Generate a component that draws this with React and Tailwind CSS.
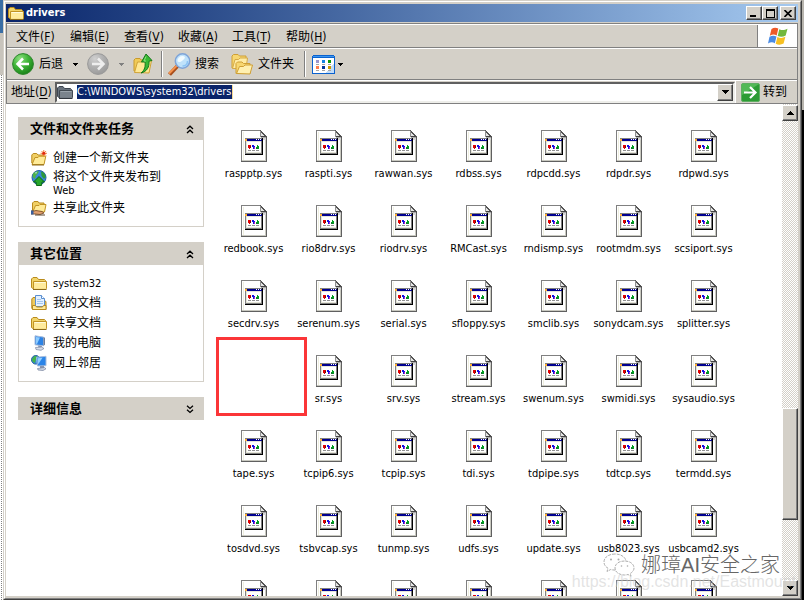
import React from 'react';

const FILES = [
  'raspptp.sys', 'raspti.sys', 'rawwan.sys', 'rdbss.sys', 'rdpcdd.sys', 'rdpdr.sys', 'rdpwd.sys',
  'redbook.sys', 'rio8drv.sys', 'riodrv.sys', 'RMCast.sys', 'rndismp.sys', 'rootmdm.sys', 'scsiport.sys',
  'secdrv.sys', 'serenum.sys', 'serial.sys', 'sfloppy.sys', 'smclib.sys', 'sonydcam.sys', 'splitter.sys',
  null, 'sr.sys', 'srv.sys', 'stream.sys', 'swenum.sys', 'swmidi.sys', 'sysaudio.sys',
  'tape.sys', 'tcpip6.sys', 'tcpip.sys', 'tdi.sys', 'tdpipe.sys', 'tdtcp.sys', 'termdd.sys',
  'tosdvd.sys', 'tsbvcap.sys', 'tunmp.sys', 'udfs.sys', 'update.sys', 'usb8023.sys', 'usbcamd2.sys',
  '', '', '', '', '', '', '',
];

const MENUS = [
  ['文件', 'F'], ['编辑', 'E'], ['查看', 'V'], ['收藏', 'A'], ['工具', 'T'], ['帮助', 'H'],
];

const RAISED =
  'flex shrink-0 items-center justify-center border border-t-white border-l-white border-r-[#404040] border-b-[#404040] bg-[#d4d0c8] shadow-[inset_-1px_-1px_0_#808080]';

function SysIcon() {
  return (
    <svg width="26" height="32" viewBox="0 0 26 32" shapeRendering="crispEdges" aria-hidden="true">
      <path d="M0 0H20L26 7V32H0Z" fill="#808080" />
      <path d="M1 1H19V7H25V31H1Z" fill="#fff" />
      <path d="M1 30H24V8H25V31H1Z" fill="#c9c9c0" />
      <path d="M2 2H3V30H2Z" fill="#efefdf" />
      <path d="M25 8H26V32H25Z" fill="#606060" />
      <path d="M0 31H26V32H0Z" fill="#606060" />
      <path d="M20 0h6v7h-1V6h-1V5h-1V4h-1V3h-1V2h-1z" fill="#fff" />
      <path d="M19 1h1v1h1v1h1v1h1v1h1v1h1v1h-6z" fill="#e4e4e4" />
      <path d="M19 0h1v1h1v1h1v1h1v1h1v1h1v1h1v2h-1V7h-1V6h-1V5h-1V4h-1V3h-1V2h-1z" fill="#555" />
      <path d="M19 1h1v6h-1z" fill="#909090" />
      <path d="M20 6H25V7H20Z" fill="#444" />
      <path d="M20 7H25V8H20Z" fill="#aaa" />
      <path d="M22 8H25V10H22Z" fill="#d4d4d4" />
      <path d="M4 8H22V25H4Z" fill="#808080" />
      <path d="M21 8H22V25H4V24H21Z" fill="#000" />
      <path d="M5 12H20V23H5Z" fill="#fff" />
      <path d="M5 11H20V12H5ZM5 22H20V23H5ZM5 12H6V23H5Z" fill="#e6e6d8" />
      <path d="M5 9H21V11H5Z" fill="#000090" />
      <path d="M4 9H6V11H4Z" fill="#ffb030" />
      <path d="M15 9h1v1h-1zM17 9h1v1h-1zM19 9h1v1h-1z" fill="#fff" />
      <path d="M7 15h3v3h-1v1h-1v-1h-1z" fill="#e00000" />
      <path d="M9 16h1v2h-1z" fill="#701010" />
      <path d="M11 15h2v1h1v1h-1v2h-1v-2h-1z" fill="#1010e0" />
      <path d="M13 17h1v2h-1z" fill="#c020c0" />
      <path d="M16 15h1v1h1v3h-3v-2h1z" fill="#00a020" />
      <path d="M15 18h2v1h-2z" fill="#107030" />
      <path d="M7 20h3v1H7zM11 20h3v1h-3zM15 20h3v1h-3z" fill="#909090" />
    </svg>
  );
}

function Folder({ size = 16, dark = false }) {
  return (
    <svg width={size} height={size} viewBox="0 0 16 16" className="shrink-0" aria-hidden="true">
      <path d="M.5 12.5V4L2 2.5h4L7.5 4.5h6l1 1v8H2z" fill={dark ? '#69727c' : '#f2d468'} stroke={dark ? '#3e4650' : '#b98b1e'} />
      <path d="M2.500 6.500h13v7l-1 .9H2.500z" fill={dark ? '#7a838c' : '#ffeb9c'} stroke={dark ? '#414951' : '#c29424'} />
      <path d="M3.500 7.500h11" stroke={dark ? '#9aa3ab' : '#fffbe0'} />
      <path d="M2 14.500h13.500" stroke={dark ? '#30363e' : '#8d6a1a'} />
    </svg>
  );
}

function NewFolder() {
  return (
    <svg width="16" height="16" viewBox="0 0 16 16" className="shrink-0" aria-hidden="true">
      <path d="M.8 13V5l1.400-1.500h3.500L7 5h6v8z" fill="#f0cf64" stroke="#b98b1e" />
      <path d="M1 14.500 4 7.500h3l1.200-1.300h6.600L13 14.500z" fill="#ffeb98" stroke="#c29424" />
      <path d="M1 15h12" stroke="#8d6a1a" />
      <path d="M12.800 0v6.600M9.500 3.300h6.500M10.500 1l4.600 4.600M15.100 1l-4.600 4.600" stroke="#f4803c" strokeWidth="1" />
      <circle cx="12.800" cy="3.300" r="1.500" fill="#e02810" />
    </svg>
  );
}

function PublishWeb() {
  return (
    <svg width="16" height="16" viewBox="0 0 16 16" className="shrink-0" aria-hidden="true">
      <circle cx="8" cy="7.500" r="7" fill="#3a86dc" stroke="#235fa8" />
      <path d="M2 3.500C4 1 7 .8 8 1.500L6.500 4 5 5.500 4 9 1.500 7z" fill="#4db34a" />
      <path d="M10 1.500c3 .5 4.500 3 4.800 5.500L13 9l-2.500-3z" fill="#2f9a3a" />
      <path d="M4 2.500 6 2 5 4z" fill="#bfe6f8" />
      <path d="m8 6.500 5.500 5.500H11l-.5 3.500h-5L5 12H2.500z" fill="#27a52c" stroke="#0d6a15" />
    </svg>
  );
}

function ShareFolder() {
  return (
    <svg width="16" height="16" viewBox="0 0 16 16" className="shrink-0" aria-hidden="true">
      <path d="M1.500 11V3L3 1.500h4L8 3h5v8z" fill="#f0cf64" stroke="#b98b1e" />
      <path d="m2 11.500 2.500-6H8L9 4.500h6L13.500 12z" fill="#ffeb98" stroke="#c29424" />
      <path d="M0 11h3l2-.5 6 1 2 1.500-4 1.500-5-.5H0z" fill="#e0a070" stroke="#70401c" strokeWidth=".8" />
      <path d="M0 10.500h2.500v4H0z" fill="#3a5f9c" />
      <path d="M4 15h10" stroke="#5c4630" />
    </svg>
  );
}

function Documents() {
  return (
    <svg width="16" height="16" viewBox="0 0 16 16" className="shrink-0" aria-hidden="true">
      <path d="M.8 13.500V4L2 2.500h3v3h8l2 1v8H2z" fill="#efcb5e" stroke="#b98b1e" />
      <path d="M4.500.5h6l3 3v8h-9z" fill="#e4f1ff" stroke="#5b8fd0" />
      <path d="M10.500.5v3h3" fill="#fff" stroke="#5b8fd0" />
      <path d="M6 4.500h4M6 6.500h6M6 8.500h6" stroke="#a3c6ee" />
      <path d="M1.500 14.500v-4h3l1 1.500h6l1-1.500h2.500v4z" fill="#ffe998" stroke="#b98b1e" />
    </svg>
  );
}

function Computer() {
  return (
    <svg width="16" height="16" viewBox="0 0 16 16" className="shrink-0" aria-hidden="true">
      <path d="m4 .8 8.500 1.300v8.700L4 9.800z" fill="#2b83e6" stroke="#a9bddb" />
      <path d="m5 2 4 .5-3 6.500-1-.2z" fill="#8ccbff" />
      <path d="m12.500 2 1.500.8v7l-1.500 1z" fill="#6b7d9c" />
      <path d="m7 10.500 4 .5-.5 2h-3z" fill="#8c9ab4" />
      <path d="m4.500 12.500 6-.5 2.500 1.500-3 1.800-5-.8z" fill="#d7deea" stroke="#7884a0" strokeWidth=".7" />
    </svg>
  );
}

function Network() {
  return (
    <svg width="16" height="16" viewBox="0 0 16 16" className="shrink-0" aria-hidden="true">
      <circle cx="4.800" cy="4.800" r="4.300" fill="#3587dc" stroke="#255e9c" />
      <path d="M1 4 3.500 1l3 .5L5 4 4 8 1.500 6.500z" fill="#43b446" />
      <path d="m5.500 2.300 9.500-1v9.400l-8.500.3z" fill="#2a84e8" stroke="#a7bddd" />
      <path d="m6.500 3.300 5-.5-4.300 6.500z" fill="#91d0ff" />
      <path d="m9 11 4-.2v2.400H9z" fill="#8997b0" />
      <path d="m6.500 13.500 7-1 1.500 1.300-3 1.700-5-.5z" fill="#ccd5e4" stroke="#74809b" strokeWidth=".7" />
    </svg>
  );
}

function CircleArrow({ forward = false }) {
  return (
    <svg width="22" height="22" viewBox="0 0 22 22" className="shrink-0" aria-hidden="true">
      <defs>
        <radialGradient id={forward ? 'fwd' : 'back'} cx="35%" cy="25%" r="80%">
          <stop offset="0" stopColor={forward ? '#d0d0d0' : '#8fe080'} />
          <stop offset=".5" stopColor={forward ? '#b0b0b0' : '#3fb437'} />
          <stop offset="1" stopColor={forward ? '#9a9a9a' : '#188018'} />
        </radialGradient>
      </defs>
      <circle cx="11" cy="11" r="10.400" fill={forward ? 'url(#fwd)' : 'url(#back)'} stroke={forward ? '#999' : '#2c862a'} />
      <path
        d={forward ? 'M5 11h11M11 5.500l5.500 5.500-5.500 5.500' : 'M17 11H6M11 5.500 5.500 11l5.500 5.500'}
        fill="none"
        stroke={forward ? '#eee' : '#fff'}
        strokeWidth="2.500"
      />
    </svg>
  );
}

function UpFolder() {
  return (
    <svg width="20" height="22" viewBox="0 0 20 22" className="shrink-0" aria-hidden="true">
      <path d="M1 18V7l1.500-1.500H7L8 7h8v12z" fill="#f0cb57" stroke="#c99a2d" />
      <path d="m1.500 19.500 3-10.500H9l1.500-1.500h8L16 20z" fill="#ffe893" stroke="#d0a338" />
      <path d="M8 20c4-3 4.500-7 4-11H8.500L13 1l6 6.500-3 .7c.5 5.800-2 10.300-8 11.800z" fill="#38b834" stroke="#16781a" />
      <path d="M13 3.500 11 8h2" fill="none" stroke="#8ce27c" />
    </svg>
  );
}

function SearchIcon() {
  return (
    <svg width="23" height="23" viewBox="0 0 23 23" className="shrink-0" aria-hidden="true">
      <path d="m1.500 21.500 8-8.500" stroke="#a84e1c" strokeWidth="4" />
      <path d="m1 20.500 8-8" stroke="#f5924c" strokeWidth="2" />
      <circle cx="14.500" cy="8" r="7.200" fill="#bfe2fb" stroke="#7fa4d8" strokeWidth="1.500" />
      <path d="M9.500 8a5 5 0 0 1 5-5c2 0 3 1 2 2.500S11 11 9.500 8z" fill="#f2fbff" />
      <path d="M19.500 8c0 3-2 5-5 5" fill="none" stroke="#8cc4f4" strokeWidth="1.500" />
    </svg>
  );
}

function FoldersIcon() {
  return (
    <svg width="22" height="22" viewBox="0 0 22 22" className="shrink-0" aria-hidden="true">
      <path d="M1 15V3l1.500-1.500H7L8.500 3H15v12z" fill="#f7d772" stroke="#cf9f35" />
      <path d="m1.500 15.500 2.500-9h3.500L9 5h7.500L15 15.500z" fill="#ffeca5" stroke="#d5aa48" />
      <path d="M5 20.500v-10L6.500 9H11l1.500 1.500H19v10z" fill="#f7d772" stroke="#cf9f35" />
      <path d="m5.500 20.500 3-7h4l1.500-1.500h7.500l-2.500 9z" fill="#fff0b0" stroke="#cf9f35" />
    </svg>
  );
}

function ViewsIcon() {
  return (
    <svg width="23" height="19" viewBox="0 0 23 19" shapeRendering="crispEdges" className="shrink-0" aria-hidden="true">
      <path d="M0 1H1V0H22V1H23V19H0Z" fill="#0b62cf" />
      <path d="M1 3H22V18H1Z" fill="#fff" />
      <path d="M14 18 22 8V18Z" fill="#c2dcf8" />
      <path d="M1 1H22V2H1Z" fill="#3c96f0" />
      <path d="M4 5h3v3H4z" fill="#9c96cc" />
      <path d="M10 5h3v3h-3z" fill="#1284e4" />
      <path d="M16 5h3v3h-3z" fill="#0a980a" />
      <path d="M4 11h3v3H4z" fill="#ff7d4c" />
      <path d="M10 11h3v3h-3z" fill="#003399" />
      <path d="M16 11h3v3h-3z" fill="#cc9900" />
      <path d="M4 9h3v1H4zM10 9h3v1h-3zM16 9h3v1h-3zM4 15h3v1H4zM10 15h3v1h-3zM16 15h3v1h-3z" fill="#a4a4a4" />
    </svg>
  );
}

function WindowsFlag() {
  return (
    <svg width="20" height="19" viewBox="0 0 20 19" aria-hidden="true">
      <path d="M3.500 2C6 .3 8 .4 10.300 1.600L8.700 8.400C6.500 7.200 4.500 7.200 1.800 8.700z" fill="#ee5a28" />
      <path d="M11.300 2.200c2.700 1.200 5 1.200 8.200-.4L17.700 8.600c-2.800 1.500-5.200 1.600-8 .4z" fill="#73b83c" />
      <path d="M1.500 9.800c2.500-1.500 4.700-1.400 7-.3L6.800 16.200C4.700 15 2.600 15.100 0 16.500z" fill="#4a8be4" />
      <path d="M9.400 10c2.700 1.200 5.200 1.200 8-.2l-1.800 6.700c-2.700 1.500-5.200 1.500-7.900.2z" fill="#f7c022" />
    </svg>
  );
}

function Caret({ color = '#000', up = false, small = false }) {
  return (
    <svg width={small ? 5 : 7} height={small ? 3 : 4} viewBox={small ? '1 1 5 3' : '0 0 7 4'} shapeRendering="crispEdges" className="shrink-0" aria-hidden="true">
      <path d={up ? 'M3 0h1v1h1v1h1v1h1v1H0V3h1V2h1V1h1z' : 'M0 0h7v1H6v1H5v1H4v1H3V3H2V2H1V1H0z'} fill={color} />
    </svg>
  );
}

function Chevrons({ down = false }) {
  return (
    <svg width="8" height="9" viewBox="0 0 8 9" aria-hidden="true">
      <path
        d={down ? 'M1 .8 4 3.500 7 .8M1 4.800 4 7.500 7 4.800' : 'M1 4 4 1.200 7 4M1 8 4 5.200 7 8'}
        fill="none"
        stroke="#000"
        strokeWidth="1.300"
      />
    </svg>
  );
}

function Separator() {
  return <div className="h-[26px] w-[2px] shrink-0 border-l border-l-[#808080] bg-white" />;
}

function Panel({ title, items }) {
  return (
    <section>
      <h2>
        <button className="flex h-[23px] w-full items-center justify-between bg-[#d4d0c8] pt-px pr-[10px] pl-3 text-[13px] leading-4 font-bold">
          {title}
          <Chevrons down={!items} />
        </button>
      </h2>
      {items && (
        <ul className="border border-t-0 border-[#d4d0c8] px-3 pt-2 pb-2">
          {items.map(({ icon: Icon, text, tall }) => (
            <li key={text}>
              <a href="#" className={`flex items-start gap-[6px] ${tall ? 'h-[30px]' : 'h-5'}`}>
                <span className="flex h-5 items-center"><Icon /></span>
                <span className={tall ? 'pt-[3px] leading-[13px]' : 'leading-5'}>
                  {/^[a-z]/i.test(text) ? <span className="text-[11px]">{text}</span> : text}
                  {tall && <span className="block text-[11px]">Web</span>}
                </span>
              </a>
            </li>
          ))}
        </ul>
      )}
    </section>
  );
}

export default function App() {
  return (
    <div className='flex h-screen overflow-hidden bg-white font-["DejaVu_Sans_Condensed","Noto_Sans_CJK_SC",sans-serif] text-[12px] text-black'>
      <div className="flex w-[3px] shrink-0 flex-col">
        <div className="h-[33px] bg-[#3a6ea5]" />
        <div className="h-[42px] bg-[#c8c4bc]" />
        <div className="ml-px flex-1 border-l border-dotted border-[#808080]" />
      </div>
      <div className="flex min-w-0 flex-1 border border-t-[#d4d0c8] border-r-[#404040] border-b-[#404040] border-l-[#d4d0c8]">
        <div className="flex min-w-0 flex-1 flex-col border border-t-white border-r-[#808080] border-b-[#808080] border-l-white bg-[#d4d0c8] pt-[2px] pr-[2px] pb-[2px] pl-px">
          <header className="mb-px flex h-[18px] shrink-0 items-center bg-linear-to-r from-[#0a246a] to-[#a6caf0] px-[2px] text-white">
            <Folder />
            <h1 className="ml-[2px] flex-1 text-[11px] leading-4 font-bold">drivers</h1>
            <button aria-label="最小化" className={`${RAISED} h-[14px] w-4`}>
              <span className="mt-[6px] mr-[2px] h-[2px] w-[6px] bg-black" />
            </button>
            <button aria-label="最大化" className={`${RAISED} mr-[2px] h-[14px] w-4`}>
              <span className="h-[9px] w-[9px] border border-t-2 border-black" />
            </button>
            <button aria-label="关闭" className={`${RAISED} h-[14px] w-4`}>
              <svg width="8" height="7" viewBox="0 0 8 7" aria-hidden="true">
                <path d="m.5 0 7 7M7.500 0l-7 7" stroke="#000" strokeWidth="1.600" />
              </svg>
            </button>
          </header>

          <div className="shrink-0 border-x border-t border-[#808080]">
            <nav className="flex h-6 border-t border-b border-t-white border-b-[#808080] pl-[9px]">
              {MENUS.map(([name, key]) => (
                <button key={key} className="flex w-[54px] items-center pt-px leading-4">
                  {name}(<u className="underline-offset-2">{key}</u>)
                </button>
              ))}
              <div className="ml-auto flex w-10 items-center justify-center border-l border-[#808080] bg-white">
                <WindowsFlag />
              </div>
            </nav>

            <div className="flex h-8 items-center border-t border-b border-t-white border-b-[#808080] pl-[5px] leading-4">
              <button className="flex items-center gap-[5px]"><CircleArrow />后退</button>
              <button aria-label="后退历史" className="flex w-6 justify-center"><Caret small /></button>
              <button aria-label="前进" disabled><CircleArrow forward /></button>
              <button aria-label="前进历史" disabled className="flex w-6 justify-center"><Caret small color="#808080" /></button>
              <button aria-label="向上"><UpFolder /></button>
              <div className="mr-[5px] ml-2"><Separator /></div>
              <button className="flex items-center gap-1"><SearchIcon />搜索</button>
              <button className="ml-3 flex items-center gap-[5px]"><FoldersIcon />文件夹</button>
              <div className="mr-[6px] ml-[10px]"><Separator /></div>
              <button aria-label="查看方式" className="flex items-center gap-[3px]"><ViewsIcon /><Caret small /></button>
            </div>

            <div className="flex h-6 items-center border-t border-b border-t-white border-b-[#808080] pl-1 leading-4">
              <label htmlFor="address" className="w-11 shrink-0">
                地址(<u className="underline-offset-2">D</u>)
              </label>
              <div className="flex h-[21px] min-w-0 flex-1 items-center border-2 border-t-[#606060] border-r-[#eeeeea] border-b-[#eeeeea] border-l-[#606060] bg-white">
                <Folder dark />
                <input
                  id="address"
                  defaultValue="C:\WINDOWS\system32\drivers"
                  className="ml-1 h-[14px] w-[156px] border-r border-[#f5db95] bg-[#0a246a] text-[11px] text-white outline-none"
                />
                <button aria-label="地址列表" className={`${RAISED} ml-auto h-[17px] w-4`}><Caret /></button>
              </div>
              <button className="flex h-full w-[62px] shrink-0 items-center gap-[3px] border-l border-white pl-[5px]">
                <svg width="19" height="19" viewBox="0 0 19 19" aria-hidden="true">
                  <rect x=".5" y=".5" width="18" height="18" rx="1.500" fill="#2c9c34" stroke="#5fae62" />
                  <path d="M1 1h17L1 12z" fill="#53b957" />
                  <path d="M3 9.500h11M9 4l5.500 5.500L9 15" fill="none" stroke="#fff" strokeWidth="2.200" />
                </svg>
                转到
              </button>
            </div>
          </div>

          <div className="relative flex min-h-0 flex-1 overflow-hidden bg-white">
            <aside className="ml-3 flex w-[186px] shrink-0 flex-col gap-[15px] pt-[13px]">
              <Panel
                title="文件和文件夹任务"
                items={[
                  { icon: NewFolder, text: '创建一个新文件夹' },
                  { icon: PublishWeb, text: '将这个文件夹发布到', tall: true },
                  { icon: ShareFolder, text: '共享此文件夹' },
                ]}
              />
              <Panel
                title="其它位置"
                items={[
                  { icon: Folder, text: 'system32' },
                  { icon: Documents, text: '我的文档' },
                  { icon: Folder, text: '共享文档' },
                  { icon: Computer, text: '我的电脑' },
                  { icon: Network, text: '网上邻居' },
                ]}
              />
              <Panel title="详细信息" />
            </aside>

            <main className="ml-3 min-w-0 flex-1 pt-2">
              <ul className="grid auto-rows-[75px] grid-cols-[repeat(auto-fill,75px)]">
                {FILES.map((name, i) => (
                  <li key={i} className="relative">
                    {name === null ? (
                      <div className="absolute top-0 left-0 h-[79px] w-[91px] border-3 border-[#fb3538]" />
                    ) : (
                      <button className="flex w-full flex-col items-center gap-[5px] pt-[18px] text-[11px] leading-[14px] whitespace-nowrap">
                        <SysIcon />
                        {name}
                      </button>
                    )}
                  </li>
                ))}
              </ul>
            </main>

            <div className="flex w-4 shrink-0 flex-col bg-[conic-gradient(#d4d0c8_25%,#ffffff_0_50%,#d4d0c8_0_75%,#ffffff_0)] bg-[length:2px_2px] pt-px">
              <button aria-label="向上滚动" className={`${RAISED} h-4`}><Caret up /></button>
              <div className="grow-[287]" />
              <div className={`${RAISED} h-28`} />
              <div className="grow-[60]" />
              <button aria-label="向下滚动" className={`${RAISED} h-4`}><Caret /></button>
            </div>

            <div className="pointer-events-none absolute right-[2px] bottom-[6px] flex flex-col items-end">
              <div className="mr-4 flex h-[18px] items-center gap-[6px]">
                <svg width="32" height="24" viewBox="0 0 32 24" aria-hidden="true">
                  <g fill="#fff" stroke="#999" strokeWidth=".8" strokeDasharray="3 1">
                    <path d="M12 1C5.500 1 1 4.500 1 9c0 2.600 1.500 4.800 4 6.200L4 18.500l3.700-2c1.300.4 2.800.6 4.300.6 6 0 11-3.600 11-8.100S18.500 1 12 1z" />
                    <path d="M21.500 8C16 8 12 11 12 15s4 7 9.500 7c1.200 0 2.400-.2 3.500-.5l3 1.700-.8-2.700C29.500 19.200 31 17.200 31 15c0-4-4-7-9.500-7z" />
                  </g>
                  <g fill="#aaa">
                    <circle cx="8" cy="6.500" r="1" /><circle cx="15.500" cy="6.500" r="1" />
                    <circle cx="18.500" cy="13" r=".8" /><circle cx="24.500" cy="13" r=".8" />
                  </g>
                </svg>
                <span className='font-["Liberation_Sans","Noto_Sans_CJK_SC",sans-serif] text-[20px] leading-[18px] font-light text-[#666] [text-shadow:-1px_-1px_0_#fff]'>
                  娜璋AI安全之家
                </span>
              </div>
              <span className='font-["Liberation_Sans",sans-serif] text-[16px] leading-4 text-[#c8c8c8]/50'>
                https://blog.csdn.net/Eastmount
              </span>
            </div>
          </div>
        </div>
      </div>
      <div className="flex w-[2px] shrink-0 flex-col bg-black">
        <div className="h-[110px] bg-[#b8b5ae]" />
      </div>
    </div>
  );
}
